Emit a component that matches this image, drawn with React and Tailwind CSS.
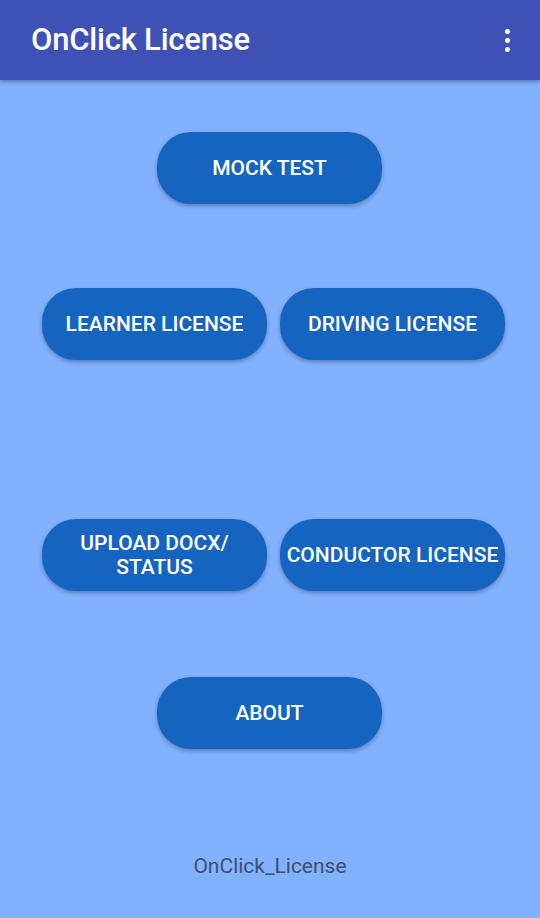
import React from 'react';

function Btn({ children, className = '' }) {
  return (
    <button
      className={`flex h-[72px] w-[225px] items-center justify-center rounded-[34px] bg-[#1565c0] px-1 text-center text-[21px] font-medium uppercase leading-[24px] text-white shadow-[0_2px_4px_rgba(0,0,0,0.3)] ${className}`}
    >
      {children}
    </button>
  );
}

export default function App() {
  return (
    <div className="flex h-[918px] w-[540px] flex-col bg-[#82b1ff] font-['Roboto',sans-serif]">
      {/* app bar */}
      <div className="z-10 flex h-[80px] shrink-0 items-center justify-between bg-[#3f51b5] pl-[31px] pr-[30px] shadow-[0_2px_4px_rgba(0,0,0,0.3)]">
        <h1 className="text-[31px] font-medium tracking-[-0.2px] text-white">OnClick License</h1>
        <div className="flex flex-col items-center gap-[4px]">
          <span className="h-[5px] w-[5px] rounded-full bg-white" />
          <span className="h-[5px] w-[5px] rounded-full bg-white" />
          <span className="h-[5px] w-[5px] rounded-full bg-white" />
        </div>
      </div>

      {/* buttons */}
      <div className="flex flex-1 flex-col items-center">
        <Btn className="mt-[52px] mr-[1px]">Mock Test</Btn>
        <div className="mt-[84px] ml-[7px] flex gap-[13px]">
          <Btn>Learner License</Btn>
          <Btn>Driving License</Btn>
        </div>
        <div className="mt-[159px] ml-[7px] flex gap-[13px]">
          <Btn>Upload Docx/<br />Status</Btn>
          <Btn>Conductor License</Btn>
        </div>
        <Btn className="mt-[86px] mr-[1px]">About</Btn>
        <p className="mt-[102px] text-[21px] text-[#3e4f6e]">OnClick_License</p>
      </div>
    </div>
  );
}
